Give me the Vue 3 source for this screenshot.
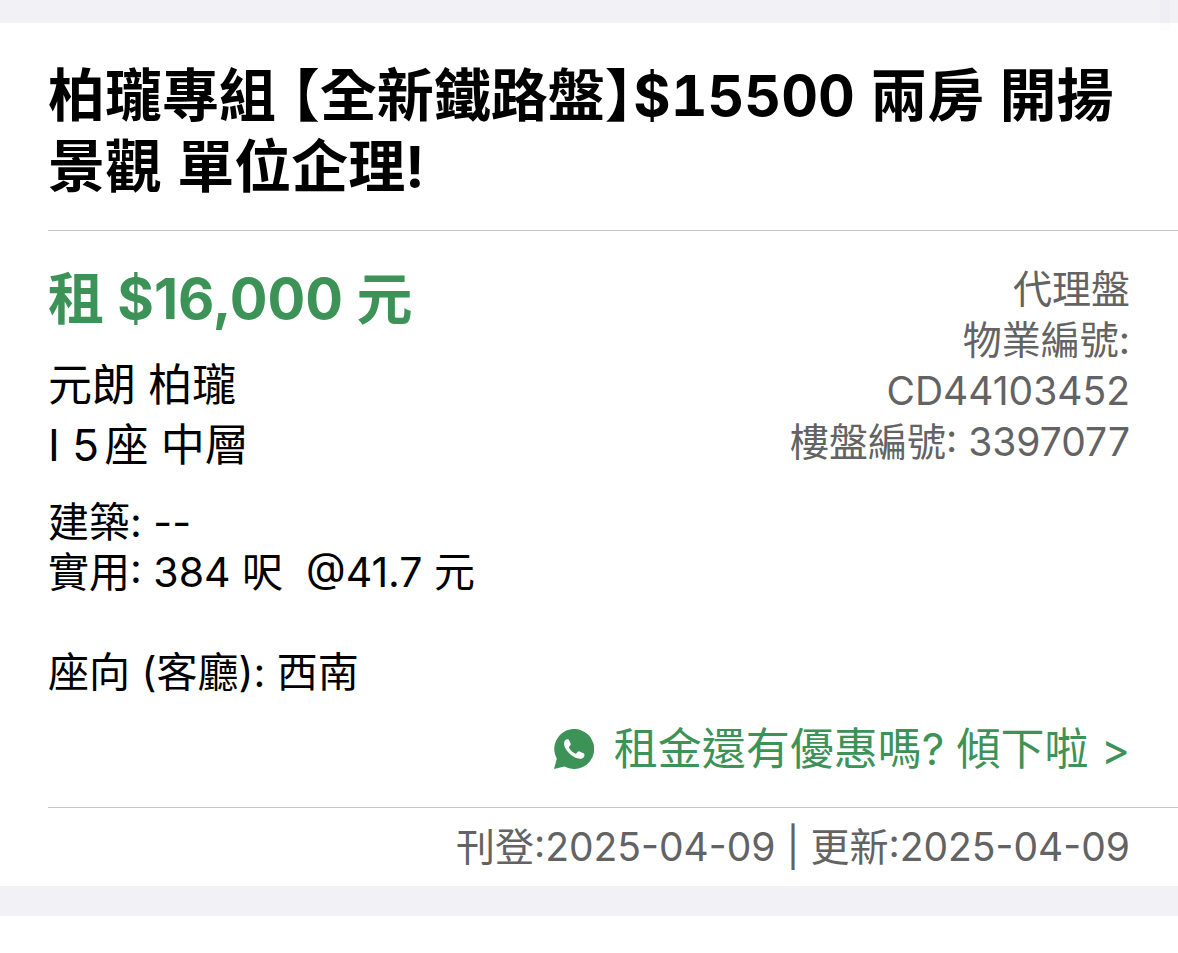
<script setup>
const listing = {
  title: '柏瓏專組 【全新鐵路盤】$15500 兩房 開揚景觀 單位企理!',
  price: '租 $16,000 元',
  address: ['元朗 柏瓏', 'I 5座 中層'],
  meta: ['代理盤', '物業編號:', 'CD44103452', '樓盤編號: 3397077'],
  details: ['建築: --', '實用: 384 呎\u00a0 @41.7 元', '\u00a0', '座向 (客廳): 西南'],
  dates: '刊登:2025-04-09 | 更新:2025-04-09',
}
</script>

<template>
  <main class="page">
    <div class="band band-top"><span class="scroll-thumb"></span></div>
    <article class="card">
      <h1 class="title">{{ listing.title }}</h1>
      <section class="body">
        <div class="summary">
          <div class="main-info">
            <p class="price">{{ listing.price }}</p>
            <p v-for="line in listing.address" :key="line" class="address">{{ line }}</p>
          </div>
          <div class="meta">
            <p v-for="line in listing.meta" :key="line">{{ line }}</p>
          </div>
        </div>
        <div class="details">
          <p v-for="line in listing.details" :key="line">{{ line }}</p>
        </div>
        <a class="chat" href="#">
          <svg class="chat-icon" viewBox="0 0 40 40" aria-hidden="true">
            <path fill="currentColor" d="M0 40 2.800 29.800A20 20 0 1 1 10.400 37.400Z" />
            <path fill="#fff" d="M15.200 11.400c-.5-1-1-1.200-1.900-1.200-1.700.1-3.300 1.800-3.300 4.400 0 2.800 1.700 5.900 4.200 8.700 2.900 3.200 6.500 5.500 10.200 6.300 2.100.4 4-.1 5.100-1.200.8-.8 1.100-1.900.9-2.900-.1-.6-.4-.9-1-1.200l-3.900-1.900c-.7-.3-1.200-.2-1.700.4l-1.200 1.500c-.4.5-.9.500-1.500.2-2.500-1.200-4.600-3.100-5.900-5.600-.3-.6-.3-1 .1-1.500l1.200-1.400c.4-.5.4-.9.1-1.500Z" />
          </svg>
          <span>租金還有優惠嗎? 傾下啦 &gt;</span>
        </a>
      </section>
      <footer class="dates">{{ listing.dates }}</footer>
    </article>
    <div class="band band-bottom"></div>
  </main>
</template>

<style>
html,
body {
  background: #fff;
}
</style>

<style scoped>
.page {
  font-family: Inter, 'Noto Sans CJK TC', sans-serif;
  text-autospace: normal;
  color: #000;
}

.page p {
  margin: 0;
}

.band {
  position: relative;
  background: #f2f1f6;
}

.band-top {
  height: 23px;
}

.band-bottom {
  height: 30px;
}

.scroll-thumb {
  position: absolute;
  top: 0;
  right: 8px;
  width: 10px;
  height: 30px;
  background: rgba(90, 90, 160, 0.02);
}

.card {
  padding-left: 48px;
}

.title {
  margin: 0;
  padding: 37px 48px 28px 0;
  font-size: 57px;
  font-weight: 700;
  font-feature-settings: 'halt', 'tnum';
  line-height: 71px;
  border-bottom: 1px solid #c6c6c8;
}

.body {
  display: flex;
  flex-direction: column;
  padding: 32px 48px 31px 0;
  border-bottom: 1px solid #c6c6c8;
}

.summary {
  display: flex;
  justify-content: space-between;
}

.price {
  color: #3d9357;
  font-size: 56px;
  font-weight: 700;
  line-height: 72px;
}

.main-info .price {
  margin-bottom: 20px;
}

.address {
  font-size: 44px;
  line-height: 60px;
}

.meta {
  color: #636363;
  font-size: 39px;
  line-height: 51px;
  text-align: right;
}

.details {
  margin-top: 22px;
  font-size: 41px;
  line-height: 50px;
}

.chat {
  display: flex;
  align-items: center;
  align-self: flex-end;
  gap: 20px;
  margin-top: 25px;
  color: #3d9357;
  font-size: 44px;
  line-height: 54px;
  text-decoration: none;
}

.chat-icon {
  width: 40px;
  height: 40px;
}

.dates {
  padding: 14px 48px 14px 0;
  color: #636363;
  font-size: 39px;
  line-height: 50px;
  text-align: right;
}
</style>
